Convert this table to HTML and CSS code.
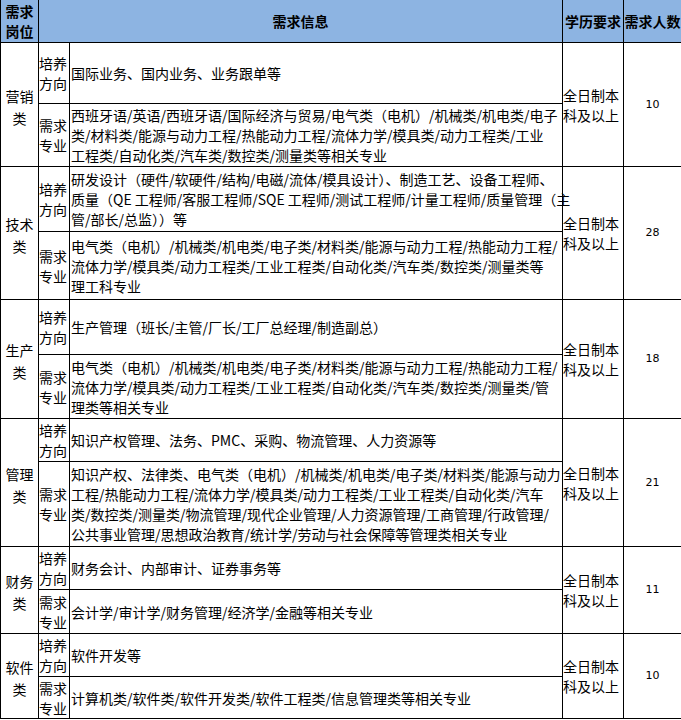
FILE: index.html
```html
<!DOCTYPE html>
<html lang="zh-CN">
<head>
<meta charset="utf-8">
<title>需求信息</title>
<link rel="stylesheet" href="styles.css">
</head>
<body>
<div class="sheet">
  <div class="cell head h-pos"><span>需求<br>岗位</span></div>
  <div class="cell head h-info"><span>需求信息</span></div>
  <div class="cell head h-edu"><span>学历要求</span></div>
  <div class="cell head h-num"><span>需求人数</span></div>

  <!-- 营销类 -->
  <div class="cell cat"><span>营销<br>类</span></div>
  <div class="cell lbl r1"><span>培养<br>方向</span></div>
  <div class="cell txt"><span>国际业务、国内业务、业务跟单等</span></div>
  <div class="cell edu"><span>全日制本<br>科及以上</span></div>
  <div class="cell num"><span>10</span></div>
  <div class="cell lbl r2"><span>需求<br>专业</span></div>
  <div class="cell txt"><span>西班牙语/英语/西班牙语/国际经济与贸易/电气类（电机）/机械类/机电类/电子<br>类/材料类/能源与动力工程/热能动力工程/流体力学/模具类/动力工程类/工业<br>工程类/自动化类/汽车类/数控类/测量类等相关专业</span></div>

  <!-- 技术类 -->
  <div class="cell cat"><span>技术<br>类</span></div>
  <div class="cell lbl r3"><span>培养<br>方向</span></div>
  <div class="cell txt"><span>研发设计（硬件/软硬件/结构/电磁/流体/模具设计）、制造工艺、设备工程师、<br>质量（QE 工程师/客服工程师/SQE 工程师/测试工程师/计量工程师/质量管理（主<br>管/部长/总监））等</span></div>
  <div class="cell edu"><span>全日制本<br>科及以上</span></div>
  <div class="cell num"><span>28</span></div>
  <div class="cell lbl r4"><span>需求<br>专业</span></div>
  <div class="cell txt"><span>电气类（电机）/机械类/机电类/电子类/材料类/能源与动力工程/热能动力工程/<br>流体力学/模具类/动力工程类/工业工程类/自动化类/汽车类/数控类/测量类等<br>理工科专业</span></div>

  <!-- 生产类 -->
  <div class="cell cat"><span>生产<br>类</span></div>
  <div class="cell lbl r5"><span>培养<br>方向</span></div>
  <div class="cell txt"><span>生产管理（班长/主管/厂长/工厂总经理/制造副总）</span></div>
  <div class="cell edu"><span>全日制本<br>科及以上</span></div>
  <div class="cell num"><span>18</span></div>
  <div class="cell lbl r6"><span>需求<br>专业</span></div>
  <div class="cell txt"><span>电气类（电机）/机械类/机电类/电子类/材料类/能源与动力工程/热能动力工程/<br>流体力学/模具类/动力工程类/工业工程类/自动化类/汽车类/数控类/测量类/管<br>理类等相关专业</span></div>

  <!-- 管理类 -->
  <div class="cell cat"><span>管理<br>类</span></div>
  <div class="cell lbl r7"><span>培养<br>方向</span></div>
  <div class="cell txt"><span>知识产权管理、法务、PMC、采购、物流管理、人力资源等</span></div>
  <div class="cell edu"><span>全日制本<br>科及以上</span></div>
  <div class="cell num"><span>21</span></div>
  <div class="cell lbl r8"><span>需求<br>专业</span></div>
  <div class="cell txt"><span>知识产权、法律类、电气类（电机）/机械类/机电类/电子类/材料类/能源与动力<br>工程/热能动力工程/流体力学/模具类/动力工程类/工业工程类/自动化类/汽车<br>类/数控类/测量类/物流管理/现代企业管理/人力资源管理/工商管理/行政管理/<br>公共事业管理/思想政治教育/统计学/劳动与社会保障等管理类相关专业</span></div>

  <!-- 财务类 -->
  <div class="cell cat"><span>财务<br>类</span></div>
  <div class="cell lbl r9"><span>培养<br>方向</span></div>
  <div class="cell txt"><span>财务会计、内部审计、证券事务等</span></div>
  <div class="cell edu"><span>全日制本<br>科及以上</span></div>
  <div class="cell num"><span>11</span></div>
  <div class="cell lbl r10"><span>需求<br>专业</span></div>
  <div class="cell txt"><span>会计学/审计学/财务管理/经济学/金融等相关专业</span></div>

  <!-- 软件类 -->
  <div class="cell cat"><span>软件<br>类</span></div>
  <div class="cell lbl r11"><span>培养<br>方向</span></div>
  <div class="cell txt"><span>软件开发等</span></div>
  <div class="cell edu"><span>全日制本<br>科及以上</span></div>
  <div class="cell num"><span>10</span></div>
  <div class="cell lbl r12"><span>需求<br>专业</span></div>
  <div class="cell txt"><span>计算机类/软件类/软件开发类/软件工程类/信息管理类等相关专业</span></div>
</div>
</body>
</html>
```

FILE: styles.css
```css
html, body {
  margin: 0;
  padding: 0;
  background: #ffffff;
  overflow: hidden;
}

.sheet {
  display: grid;
  grid-template-columns: 38px 31px 493px 61px 57px;
  grid-template-rows: 43px 61px 63px 65px 68px 55px 64px 43px 85px 43px 44px 43px 42px;
  border-left: 1px solid #000;
  width: 680px;
  font-family: "Noto Sans CJK SC", "Noto Sans", sans-serif;
  font-size: 14px;
  line-height: 20px;
  color: #000;
}

.cell {
  display: flex;
  align-items: center;
  border-right: 1px solid #000;
  border-bottom: 1px solid #000;
  white-space: nowrap;
  box-sizing: border-box;
  min-width: 0;
}

.head {
  background: #8db4e2;
  font-weight: bold;
  justify-content: center;
}

.h-info {
  grid-column: span 2;
}

.h-num,
.num {
  border-right: none;
}

.cat {
  grid-row: span 2;
  justify-content: center;
  text-align: center;
  line-height: 22px;
  padding-top: 4px;
}

.lbl {
  padding-left: 0;
}

.txt {
  padding-left: 1px;
}

.edu {
  grid-row: span 2;
  padding-left: 0;
}

.num {
  grid-row: span 2;
  justify-content: center;
  font-family: "DejaVu Sans", Verdana, sans-serif;
  font-size: 11px;
}
```
